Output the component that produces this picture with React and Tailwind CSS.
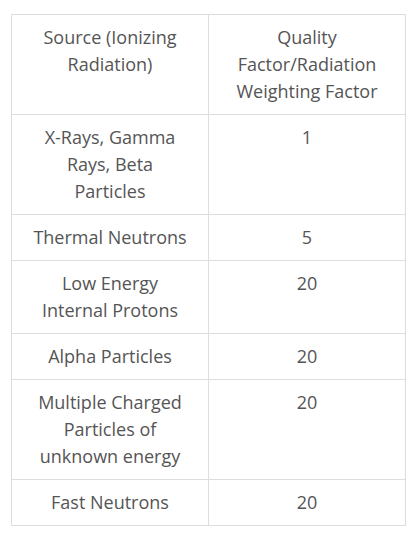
const rows = [
  ['X-Rays, Gamma Rays, Beta Particles', '1'],
  ['Thermal Neutrons', '5'],
  ['Low Energy Internal Protons', '20'],
  ['Alpha Particles', '20'],
  ['Multiple Charged Particles of unknown energy', '20'],
  ['Fast Neutrons', '20'],
]

export default function App() {
  return (
    <div className="min-h-screen bg-white pt-[14px] pl-[11px]" style={{ fontFamily: '"Open Sans", sans-serif' }}>
      <table className="w-[395px] table-fixed border-collapse text-[18px] leading-[27px] text-[#555]">
        <thead>
          <tr>
            <th className="border border-[#ddd] px-[20px] pt-[9px] pb-[9px] text-center align-top font-normal">
              Source (Ionizing Radiation)
            </th>
            <th className="border border-[#ddd] px-[20px] pt-[9px] pb-[9px] text-center align-top font-normal">
              Quality Factor/Radiation Weighting Factor
            </th>
          </tr>
        </thead>
        <tbody>
          {rows.map(([src, q]) => (
            <tr key={src}>
              <td className="border border-[#ddd] px-[20px] pt-[9px] pb-[9px] text-center align-top">{src}</td>
              <td className="border border-[#ddd] px-[20px] pt-[9px] pb-[9px] text-center align-top">{q}</td>
            </tr>
          ))}
        </tbody>
      </table>
    </div>
  )
}
